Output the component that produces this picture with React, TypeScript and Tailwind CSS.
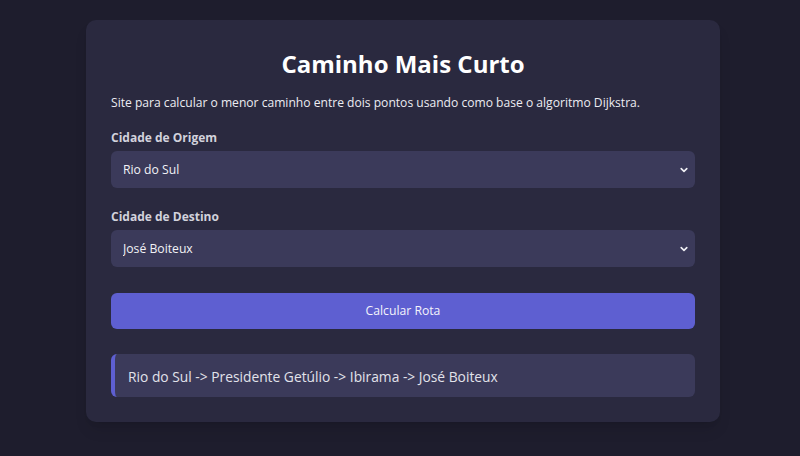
import { useState } from 'react';

const CIDADES = ['Rio do Sul', 'Presidente Getúlio', 'Ibirama', 'José Boiteux'];

function Chevron() {
  return (
    <svg
      className="pointer-events-none absolute right-[7px] top-1/2 -translate-y-1/2"
      width="8"
      height="8"
      viewBox="0 0 8 8"
      fill="none"
    >
      <path d="M1.2 2.6 4 5.4 6.8 2.6" stroke="#f0f0f5" strokeWidth="1.6" strokeLinecap="round" strokeLinejoin="round" />
    </svg>
  );
}

function CitySelect({ label, value, onChange }: { label: string; value: string; onChange: (v: string) => void }) {
  return (
    <div className="flex flex-col">
      <label className="mb-[4px] pt-[1px] text-[12px] font-bold leading-[18px] text-[#d2d2dc]">{label}</label>
      <div className="relative">
        <select
          value={value}
          onChange={(e) => onChange(e.target.value)}
          className="h-[37px] w-full appearance-none rounded-[6px] bg-[#3b3a5a] pl-[12px] pt-[2px] text-[12.2px] text-[#f2f2f6] outline-none"
        >
          {CIDADES.map((c) => (
            <option key={c} value={c}>
              {c}
            </option>
          ))}
        </select>
        <Chevron />
      </div>
    </div>
  );
}

export default function App() {
  const [origem, setOrigem] = useState('Rio do Sul');
  const [destino, setDestino] = useState('José Boiteux');

  return (
    <div
      className="flex min-h-[456px] w-full justify-center bg-[#1e1d2d] pl-[6px] pt-[20px]"
      style={{ fontFamily: '"Open Sans", "Noto Sans", sans-serif' }}
    >
      <div className="h-[402px] w-[634px] rounded-[10px] bg-[#2a293f] px-[25px] pt-[26px] shadow-lg">
        <h1 className="text-center text-[24px] font-bold leading-[36px] text-white">Caminho Mais Curto</h1>
        <p className="mt-[12px] text-[12.1px] leading-[18px] text-[#ececf2]">
          Site para calcular o menor caminho entre dois pontos usando como base o algoritmo Dijkstra.
        </p>

        <div className="mt-[16px] flex flex-col gap-[19px]">
          <CitySelect label="Cidade de Origem" value={origem} onChange={setOrigem} />
          <CitySelect label="Cidade de Destino" value={destino} onChange={setDestino} />
        </div>

        <button className="mt-[26px] h-[36px] w-full rounded-[6px] bg-[#5e5fd1] pt-[1px] text-[12.2px] text-[#f4f4fb]">
          Calcular Rota
        </button>

        <div className="mt-[25px] flex h-[43px] items-center rounded-[6px] border-l-[4px] border-[#5e5fd1] bg-[#3b3a5a] pl-[13px] pt-[3px] text-[13.8px] text-[#e2e2ea]">
          Rio do Sul -&gt; Presidente Getúlio -&gt; Ibirama -&gt; José Boiteux
        </div>
      </div>
    </div>
  );
}
